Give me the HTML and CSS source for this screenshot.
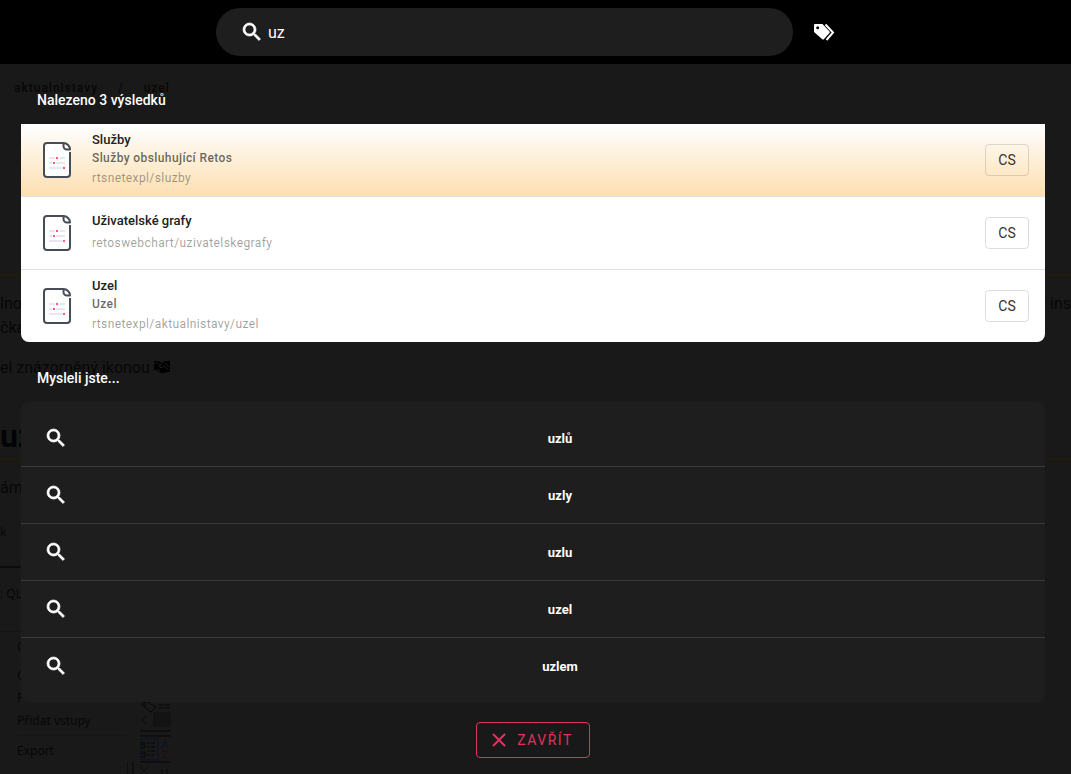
FILE: index.html
```html
<!DOCTYPE html>
<html lang="cs">
<head>
  <meta charset="UTF-8">
  <meta name="viewport" content="width=device-width, initial-scale=1">
  <title>Uzel</title>
  <link rel="stylesheet" href="styles.css">
</head>
<body>

<svg class="sprite" aria-hidden="true">
  <symbol id="icon-search" viewBox="0 0 24 24">
    <path d="M15.5 14h-.79l-.28-.27A6.47 6.47 0 0 0 16 9.5 6.5 6.5 0 1 0 9.5 16c1.61 0 3.09-.59 4.23-1.57l.27.28v.79l5 4.99L20.49 19l-4.99-5zm-6 0C7.01 14 5 11.99 5 9.5S7.01 5 9.5 5 14 7.01 14 9.5 11.99 14 9.5 14z"/>
  </symbol>
  <symbol id="icon-doc" viewBox="0 0 30 38">
    <path class="doc-paper" d="M21 2H5a3 3 0 0 0-3 3v28a3 3 0 0 0 3 3h20a3 3 0 0 0 3-3V11"/>
    <path class="doc-paper" d="M21.5 2v3a3.5 3.5 0 0 0 3.5 3.5h3C28 5 25 2 21.5 2z"/>
    <path class="doc-line" d="M7 17h6M18 17h5M7 22h3M14 22h9M7 27h13"/>
    <path class="doc-dot" d="M14 17h2M11 22h2M21 27h2"/>
  </symbol>
</svg>

<header class="header">
  <form class="search">
    <label class="search-field">
      <svg class="icon"><use href="#icon-search"/></svg>
      <input type="text" value="uz" aria-label="Hledat">
    </label>
    <button class="tag-btn" type="button" aria-label="Štítky">
      <svg class="icon-tags" viewBox="0 0 22 18">
        <path fill-rule="evenodd" d="M2 1h7.5l7 7.5a1.2 1.2 0 0 1 0 1.6l-5.500 6a1.4 1.4 0 0 1-2 0L1 9V2a1 1 0 0 1 1-1zm2.700 2.200a1.500 1.500 0 1 0 0 3 1.500 1.500 0 0 0 0-3z"/>
        <path class="tags-edge" d="M12.500 1.500l7.500 8-6.500 7.500"/>
      </svg>
    </button>
  </form>
</header>

<div class="stage">
  <main class="page">
    <nav class="crumbs"><a href="#">aktualnistavy</a><span>/</span><a href="#">uzel</a></nav>
    <div class="intro">
      <div class="split"><span>lnož</span><span>ři ins</span></div>
      <div>čka</div>
      <p>el znázorněný ikonou
        <svg class="icon-link" viewBox="0 0 16 13"><path d="M0 1h5l3 2 3-2h5v11h-4l-1 1H7L2 10H0z"/><path class="link-edge" d="M0 4l3-2 5 6 2-2 5 4M8 3L5 6l2 2M3 9l3 2M11 3l4 4"/></svg>
      </p>
    </div>
    <h2>uz</h2>
    <p class="name">áme</p>
    <p class="cell">k</p>
    <p class="cell cell-wide">: QL-</p>
    <div class="lower">
      <ul class="menu">
        <li>O</li>
        <li>O</li>
        <li>P</li>
        <li>Přidat vstupy</li>
        <li>Export</li>
      </ul>
      <svg class="toolbar" viewBox="0 0 44 74">
        <path class="tool-fill" d="M26 12h18v15H26z"/>
        <path class="tool-line" d="M15 5l4-4 10 6-5 5zM19 1l-1 6M32 5h5m1 0h5M32 8h5m1 0h5M19 16l-4 4 4 4M13 31h31M13 36h31M0 62v12M6 62v12M13 67l4 4 4-4M35 69v5M40 69v5M13 62h31"/>
        <path class="tool-blue" d="M14 39h17v21H14zM35 48l3-8 3 8m-5-3h4"/>
        <path class="tool-line" d="M14 43h4v5h-4m0-3h3M14 52h4v5h-4m0-3h3M20 43h3m1 0h4M20 47h3m1 0h4M20 51h3m1 0h4M20 55h3m1 0h4"/>
        <path class="tool-red" d="M35 51h6l-6 7h6"/>
      </svg>
    </div>
  </main>

  <section class="overlay">
    <h3>Nalezeno 3 výsledků</h3>
    <ul class="results">
      <li class="active">
        <svg class="icon-doc"><use href="#icon-doc"/></svg>
        <a class="result-text" href="#">
          <strong>Služby</strong>
          <b>Služby obsluhující Retos</b>
          <span>rtsnetexpl/sluzby</span>
        </a>
        <button type="button" class="lang">CS</button>
      </li>
      <li>
        <svg class="icon-doc"><use href="#icon-doc"/></svg>
        <a class="result-text" href="#">
          <strong>Uživatelské grafy</strong>
          <span>retoswebchart/uzivatelskegrafy</span>
        </a>
        <button type="button" class="lang">CS</button>
      </li>
      <li>
        <svg class="icon-doc"><use href="#icon-doc"/></svg>
        <a class="result-text" href="#">
          <strong>Uzel</strong>
          <b>Uzel</b>
          <span>rtsnetexpl/aktualnistavy/uzel</span>
        </a>
        <button type="button" class="lang">CS</button>
      </li>
    </ul>

    <h3>Mysleli jste...</h3>
    <ul class="suggestions">
      <li><a href="#"><svg class="icon"><use href="#icon-search"/></svg><span>uzlů</span></a></li>
      <li><a href="#"><svg class="icon"><use href="#icon-search"/></svg><span>uzly</span></a></li>
      <li><a href="#"><svg class="icon"><use href="#icon-search"/></svg><span>uzlu</span></a></li>
      <li><a href="#"><svg class="icon"><use href="#icon-search"/></svg><span>uzel</span></a></li>
      <li><a href="#"><svg class="icon"><use href="#icon-search"/></svg><span>uzlem</span></a></li>
    </ul>

    <button type="button" class="close-btn">
      <svg class="icon-close" viewBox="0 0 14 14"><path d="M1 1l12 12M13 1L1 13"/></svg>
      Zavřít
    </button>
  </section>
</div>

</body>
</html>
```
FILE: styles.css
```css
* {
  box-sizing: border-box;
}

body {
  margin: 0;
  height: 100vh;
  display: flex;
  flex-direction: column;
  overflow: hidden;
  background: #191919;
  color: #fff;
  font-family: Roboto, "Liberation Sans", sans-serif;
}

ul {
  list-style: none;
  margin: 0;
  padding: 0;
}

a {
  color: inherit;
  text-decoration: none;
}

button, input {
  font-family: inherit;
  color: inherit;
  background: none;
  border: none;
}

.sprite {
  display: none;
}

.icon {
  width: 24px;
  height: 24px;
  flex: none;
  fill: #fff;
  stroke: #fff;
  stroke-width: 0.7;
}

/* header */
.header {
  flex: none;
  padding: 8px;
  background: #000;
}

.search {
  display: flex;
  gap: 8px;
  max-width: 639px;
  margin: 0 auto;
}

.search-field {
  flex: 1;
  display: flex;
  align-items: center;
  gap: 4px;
  height: 48px;
  padding: 0 24px;
  border-radius: 24px;
  background: #1e1e1e;
}

.search-field input {
  flex: 1;
  padding: 0;
  font-size: 16px;
  outline: none;
}

.tag-btn {
  width: 54px;
  padding: 0 12px;
  display: flex;
  align-items: center;
  cursor: pointer;
}

.icon-tags {
  width: 22px;
  height: 18px;
  fill: #fff;
}

.tags-edge {
  fill: none;
  stroke: #fff;
  stroke-width: 2;
}

.stage {
  flex: 1;
  position: relative;
  overflow: hidden;
}

/* dimmed page under the overlay */
.page {
  color: #070707;
  font-size: 16px;
  line-height: 24px;
}

.page p, .page h2 {
  margin: 0;
}

.crumbs {
  display: flex;
  gap: 20px;
  height: 140px;
  padding: 12px 14px;
  border-bottom: 1px solid #171717;
  font-size: 12px;
  font-weight: 500;
  letter-spacing: 1px;
}

.intro {
  margin-top: 70px;
  padding-top: 16px;
  border-top: 2px solid #211b08;
}

.intro p {
  margin-top: 16px;
}

.split {
  display: flex;
  justify-content: space-between;
}

.icon-link {
  width: 16px;
  height: 13px;
}

.link-edge {
  fill: none;
  stroke: #1c1c1c;
}

.page h2 {
  margin-top: 36px;
  padding-bottom: 2px;
  border-bottom: 2px solid #211b08;
  color: #020407;
  font-size: 32px;
  line-height: 40px;
}

.page .name {
  margin-top: 16px;
}

.page .cell {
  width: 240px;
  height: 68px;
  padding-top: 20px;
  border-bottom: 2px solid #0c0c0c;
  font-family: "Noto Sans", sans-serif;
  font-size: 12px;
}

.page .cell-wide {
  height: 64px;
  padding-top: 14px;
  border-bottom: 1px solid #141414;
}

.lower {
  display: flex;
}

.menu {
  width: 127px;
  padding-left: 17px;
  font-family: "Noto Sans", sans-serif;
  font-size: 12px;
  line-height: 29px;
}

.menu li:nth-child(3) {
  line-height: 16px;
}

.menu li:nth-child(4) {
  border-bottom: 1px solid #151515;
}

.toolbar {
  width: 44px;
  height: 74px;
  margin-top: 68px;
  fill: none;
}

.tool-fill {
  fill: #131313;
}

.tool-line {
  stroke: #070707;
}

.tool-blue {
  stroke: #0a1226;
}

.tool-red {
  stroke: #210c0e;
}

/* search results */
.overlay {
  position: absolute;
  inset: 0;
  display: flex;
  flex-direction: column;
  padding: 0 26px 0 21px;
}

.overlay h3 {
  margin: 0;
  padding: 24px 16px 12px;
  font-size: 14px;
  line-height: 24px;
  font-weight: 500;
}

.results {
  overflow: hidden;
  flex: none;
  border-radius: 0 0 8px 8px;
  background: #fff;
}

.results li {
  display: flex;
  align-items: center;
  height: 73px;
  padding: 0 16px 0 21px;
  border-bottom: 1px solid #e0e0e0;
}

.results li:last-child {
  height: 72px;
  border-bottom: none;
}

.results .active {
  background: linear-gradient(#fff, #fddfb0);
}

.icon-doc {
  width: 30px;
  height: 38px;
  flex: none;
}

.doc-paper {
  fill: #fff;
  stroke: #474c57;
  stroke-width: 2;
  stroke-linejoin: round;
}

.doc-line {
  stroke: #e6e7f0;
  stroke-width: 2;
}

.doc-dot {
  stroke: #ff5a79;
  stroke-width: 2;
}

.result-text {
  flex: 1;
  display: flex;
  flex-direction: column;
  padding-left: 20px;
  font-size: 12px;
  line-height: 20px;
  letter-spacing: 0.4px;
}

.result-text strong {
  color: #212121;
  font-size: 13px;
  font-weight: 500;
  letter-spacing: 0;
}

.result-text b {
  color: rgba(0, 0, 0, 0.6);
  font-weight: 500;
  line-height: 16px;
}

.result-text span {
  color: rgba(0, 0, 0, 0.38);
  line-height: 24px;
}

.lang {
  width: 44px;
  height: 32px;
  padding: 0;
  border: 1px solid rgba(0, 0, 0, 0.13);
  border-radius: 4px;
  color: #333;
  font-size: 14px;
  cursor: pointer;
}

/* suggestions */
.suggestions {
  flex: none;
  padding: 8px 0;
  border-radius: 8px;
  background: #1e1e1e;
}

.suggestions li + li {
  border-top: 1px solid #3b3b3b;
}

.suggestions a {
  display: flex;
  align-items: center;
  height: 56px;
  padding-left: 23px;
}

.suggestions span {
  flex: 1;
  padding-left: 7px;
  text-align: center;
  font-size: 13px;
  font-weight: 700;
}

.close-btn {
  align-self: center;
  display: flex;
  align-items: center;
  gap: 11px;
  flex: none;
  height: 36px;
  margin-top: 20px;
  padding: 0 16px 0 15px;
  border: 1px solid #e0315f;
  border-radius: 4px;
  color: #e0315f;
  font-size: 14px;
  letter-spacing: 1.5px;
  text-transform: uppercase;
  cursor: pointer;
}

.icon-close {
  width: 14px;
  height: 14px;
  stroke: #e0315f;
  stroke-width: 2;
}
```
